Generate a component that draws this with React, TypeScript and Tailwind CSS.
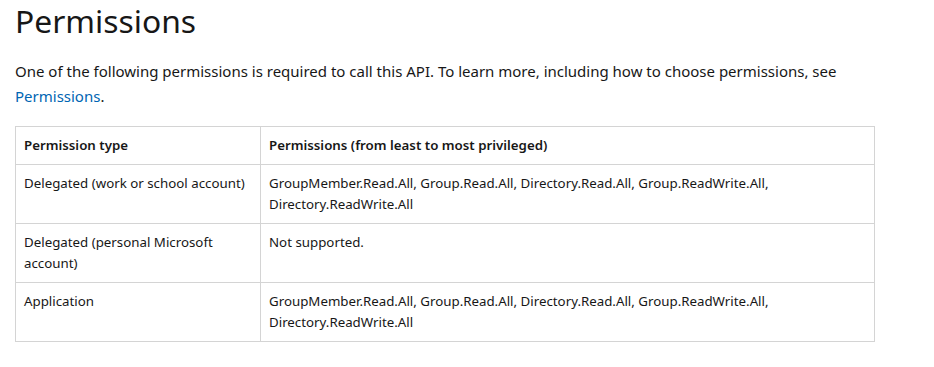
export default function App() {
  const rows = [
    {
      type: "Delegated (work or school account)",
      perms: "GroupMember.Read.All, Group.Read.All, Directory.Read.All, Group.ReadWrite.All, Directory.ReadWrite.All",
    },
    { type: "Delegated (personal Microsoft account)", perms: "Not supported." },
    {
      type: "Application",
      perms: "GroupMember.Read.All, Group.Read.All, Directory.Read.All, Group.ReadWrite.All, Directory.ReadWrite.All",
    },
  ]

  return (
    <div
      className="min-h-screen bg-white px-[15px] text-[#171717]"
      style={{ fontFamily: '"Noto Sans", "Open Sans", sans-serif' }}
    >
      {/* HEADING */}
      <h2 className="text-[31.8px] leading-[42px] font-normal">Permissions</h2>

      <p className="mt-[17px] w-[860px] text-[15px] leading-[25px]">
        One of the following permissions is required to call this API. To learn more, including how to choose
        permissions, see <a className="text-[#0065b3]">Permissions</a>.
      </p>

      {/* TABLE */}
      <table className="mt-[17px] w-[860px] border-collapse border border-[#d4d4d4] text-[13.3px] leading-[21px]">
        <thead>
          <tr>
            <th className="w-[245px] border border-[#d4d4d4] px-2 py-2 text-left font-semibold align-top">
              Permission type
            </th>
            <th className="border border-[#d4d4d4] px-2 py-2 text-left font-semibold align-top">
              Permissions (from least to most privileged)
            </th>
          </tr>
        </thead>
        <tbody>
          {rows.map((r) => (
            <tr key={r.type}>
              <td className="border border-[#d4d4d4] px-2 py-2 align-top">{r.type}</td>
              <td className="border border-[#d4d4d4] px-2 py-2 align-top">{r.perms}</td>
            </tr>
          ))}
        </tbody>
      </table>
    </div>
  )
}
